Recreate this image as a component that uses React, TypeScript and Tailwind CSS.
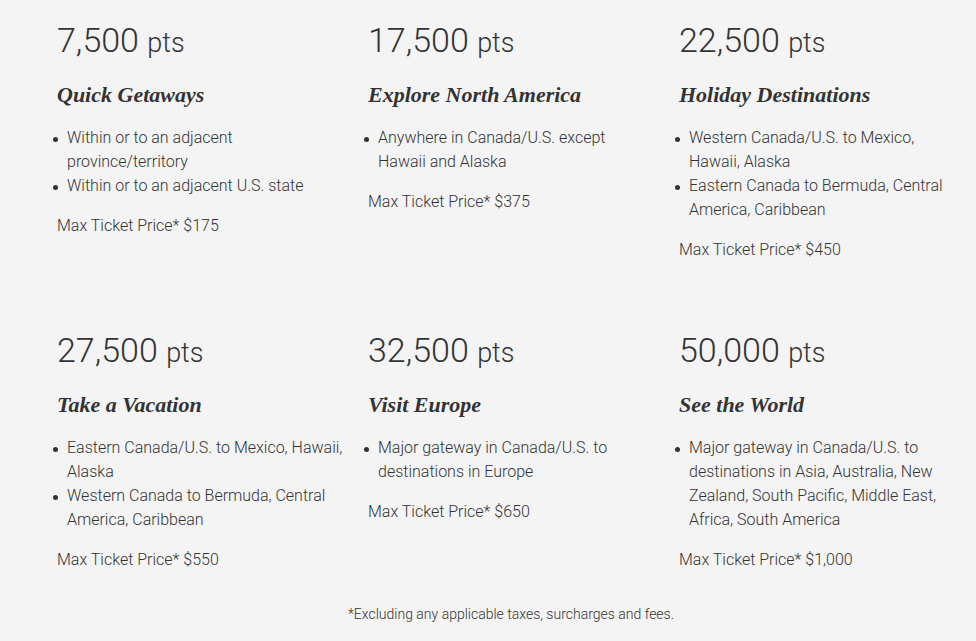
type Tier = {
    points: string
    title: string
    items: string[]
    price: string
}

const tiers: Tier[] = [
    {
        points: "7,500",
        title: "Quick Getaways",
        items: ["Within or to an adjacent province/territory", "Within or to an adjacent U.S. state"],
        price: "$175",
    },
    {
        points: "17,500",
        title: "Explore North America",
        items: ["Anywhere in Canada/U.S. except Hawaii and Alaska"],
        price: "$375",
    },
    {
        points: "22,500",
        title: "Holiday Destinations",
        items: ["Western Canada/U.S. to Mexico, Hawaii, Alaska", "Eastern Canada to Bermuda, Central America, Caribbean"],
        price: "$450",
    },
    {
        points: "27,500",
        title: "Take a Vacation",
        items: ["Eastern Canada/U.S. to Mexico, Hawaii, Alaska", "Western Canada to Bermuda, Central America, Caribbean"],
        price: "$550",
    },
    {
        points: "32,500",
        title: "Visit Europe",
        items: ["Major gateway in Canada/U.S. to destinations in Europe"],
        price: "$650",
    },
    {
        points: "50,000",
        title: "See the World",
        items: ["Major gateway in Canada/U.S. to destinations in Asia, Australia, New Zealand, South Pacific, Middle East, Africa, South America"],
        price: "$1,000",
    },
]

function TierCard({ tier }: { tier: Tier }) {
    return (
        <div className="flex flex-col">
            <div className="font-light text-[34px] leading-[40px] text-[#333]">
                {tier.points} <span className="text-[27px]">pts</span>
            </div>
            <h3 className="mt-[18px] font-['Liberation_Serif',serif] italic font-bold text-[22px] leading-[28px] text-[#333]">
                {tier.title}
            </h3>
            <ul className="mt-[17px] flex flex-col">
                {tier.items.map((item) => (
                    <li key={item} className="flex items-start">
                        <span className="shrink-0 w-[5px] h-[5px] rounded-full bg-[#333] ml-[-4px] mr-[9px] mt-[11px]" />
                        <span>{item}</span>
                    </li>
                ))}
            </ul>
            <p className="mt-[16px]">Max Ticket Price* {tier.price}</p>
        </div>
    )
}

export default function App() {
    return (
        <div className="min-h-[641px] bg-[#f4f4f4] font-['Roboto',sans-serif] font-light text-[16px] leading-[24px] text-[#333] pt-[20px]">
            <div className="grid grid-cols-[288px_288px_288px] gap-x-[23px] gap-y-[68px] pl-[57px]">
                {tiers.map((tier) => (
                    <TierCard key={tier.points} tier={tier} />
                ))}
            </div>
            <p className="mt-[32px] ml-[57px] w-[908px] text-center text-[14px] leading-[20px]">
                *Excluding any applicable taxes, surcharges and fees.
            </p>
        </div>
    )
}
